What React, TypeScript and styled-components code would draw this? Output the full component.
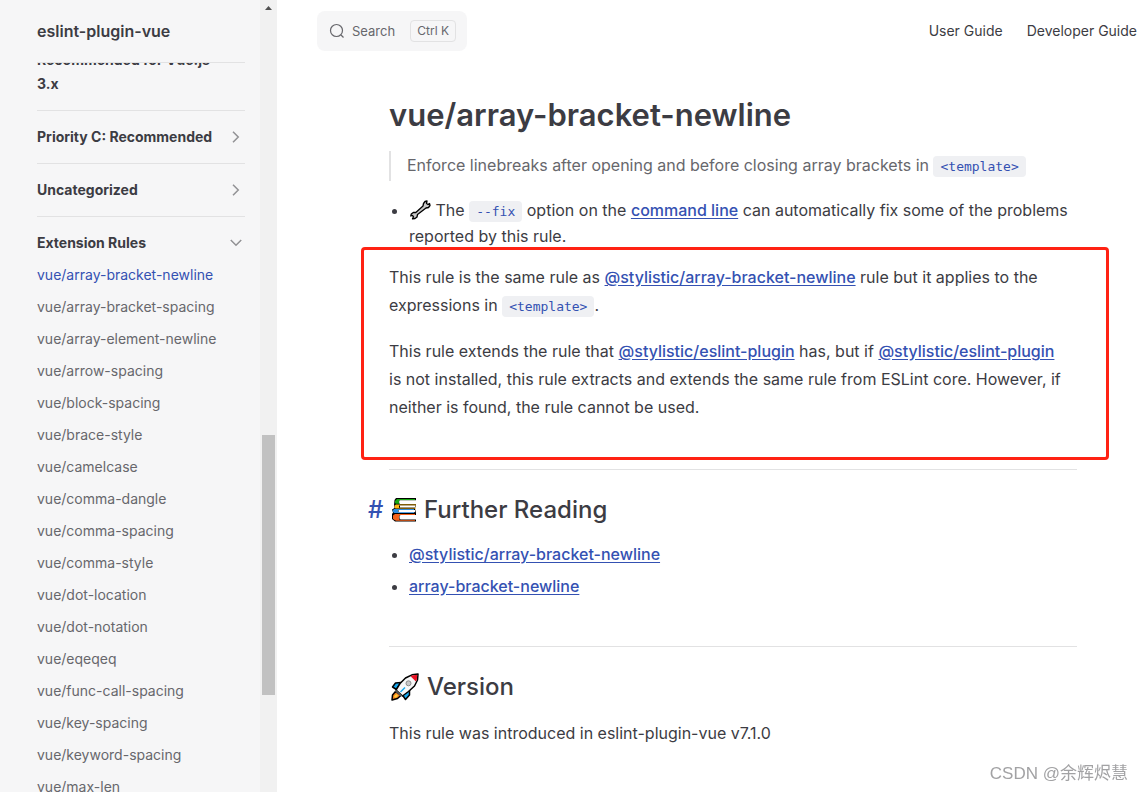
import React from "react";
import styled, { createGlobalStyle, css } from "styled-components";

const Global = createGlobalStyle`
  *, *::before, *::after { box-sizing: border-box; }
  body {
    margin: 0;
    background: #fff;
    color: #3c3c43;
    font: 400 16px/28px Inter, "Noto Sans CJK SC", sans-serif;
  }
  h1, h2, h3, p, ul, blockquote { margin: 0; padding: 0; }
  a { color: inherit; text-decoration: none; }
  button { font: inherit; color: inherit; cursor: pointer; }
`;

const Shell = styled.div`
  display: flex;
  min-height: 100vh;
`;

const Sidebar = styled.aside`
  position: sticky;
  top: 0;
  flex: none;
  display: flex;
  width: 277px;
  height: 100vh;
  overflow: hidden;
  background: #f6f6f7;
`;

const SidebarBody = styled.div`
  flex: 1;
  display: flex;
  flex-direction: column;
  min-width: 0;
  padding: 0 15px 0 37px;
`;

const Brand = styled.a`
  position: relative;
  z-index: 1;
  flex: none;
  height: 63px;
  border-bottom: 1px solid #e2e2e3;
  background: #f6f6f7;
  font-weight: 600;
  line-height: 62px;
`;

const Groups = styled.nav`
  margin-top: -25px;
`;

const Group = styled.section`
  padding: 10px 0;
  & + & { border-top: 1px solid #e2e2e3; }
  &:first-child { padding-top: 6px; }
`;

const GroupToggle = styled.button`
  display: flex;
  align-items: center;
  justify-content: space-between;
  width: 100%;
  padding: 4px 0;
  border: 0;
  background: none;
  text-align: left;
  font-size: 14px;
  line-height: 24px;
  font-weight: 700;
`;

const GroupName = styled.span`
  max-width: 176px;
`;

const Chevron = styled.svg<{ $open?: boolean }>`
  flex: none;
  width: 18px;
  height: 18px;
  fill: none;
  stroke: #929295;
  stroke-width: 2;
  ${(p) => p.$open && css`transform: rotate(90deg);`}
`;

const RuleList = styled.ul`
  list-style: none;
`;

const RuleLink = styled.a<{ $active?: boolean }>`
  display: block;
  padding: 4px 0;
  font-size: 14px;
  line-height: 24px;
  color: ${(p) => (p.$active ? "#3451b2" : "#67676c")};
`;

const Scrollbar = styled.div`
  flex: none;
  display: flex;
  flex-direction: column;
  align-items: center;
  width: 17px;
  background: #f1f1f1;
`;

const ScrollArrow = styled.svg`
  flex: none;
  width: 17px;
  height: 17px;
  fill: #505050;
`;

const ScrollGap = styled.div<{ $grow: number }>`
  flex: ${(p) => p.$grow} 1 0;
`;

const ScrollThumb = styled.div`
  flex: 260 1 0;
  width: 13px;
  background: #c1c1c1;
`;

const Page = styled.div`
  flex: 1;
  min-width: 0;
`;

const TopBar = styled.header`
  display: flex;
  align-items: center;
  justify-content: space-between;
  height: 62px;
  padding: 0 6px 0 40px;
`;

const SearchButton = styled.button`
  display: flex;
  align-items: center;
  width: 150px;
  height: 40px;
  padding: 0 11px 0 12px;
  border: 0;
  border-radius: 8px;
  background: #f6f6f7;
  color: #67676c;
  font-size: 13px;
  line-height: 20px;
`;

const SearchIcon = styled.svg`
  width: 16px;
  height: 16px;
  margin-right: 7px;
  fill: none;
  stroke: #67676c;
  stroke-width: 1.2;
`;

const Shortcut = styled.kbd`
  margin-left: auto;
  padding: 0 6px;
  border: 1px solid #e2e2e3;
  border-radius: 4px;
  font: 400 12px/20px Inter, sans-serif;
`;

const TopLinks = styled.nav`
  display: flex;
  gap: 24px;
  font-size: 14px;
  line-height: 24px;
`;

const Article = styled.main`
  max-width: 866px;
  padding: 33px 66px 45px 112px;
`;

const Title = styled.h1`
  font-size: 31px;
  line-height: 40px;
  font-weight: 600;
`;

const Summary = styled.blockquote`
  margin-top: 16px;
  padding: 0 0 2px 16px;
  border-left: 2px solid #e2e2e3;
  color: #67676c;
`;

const Code = styled.code`
  padding: 3px 7px;
  border-radius: 4px;
  background: #eff0f3;
  color: #3451b2;
  font: 400 13px/20px "DejaVu Sans Mono", monospace;
`;

const TextLink = styled.a`
  color: #3451b2;
  font-weight: 500;
  text-decoration: underline;
  text-underline-offset: 2px;
`;

const Bullets = styled.ul<{ $tight?: boolean }>`
  margin-top: 16px;
  padding-left: 20px;
  line-height: ${(p) => (p.$tight ? "26px" : "24px")};
  li + li { margin-top: 8px; }
`;

const Highlight = styled.section`
  position: relative;
  padding-top: 14px;
  p + p { margin-top: 18px; }
  &::after {
    content: "";
    position: absolute;
    inset: -2px -32px -39px -28px;
    border: 3px solid #ff2213;
    border-radius: 4px;
    pointer-events: none;
  }
`;

const Heading = styled.h2`
  position: relative;
  display: flex;
  align-items: center;
  gap: 8px;
  margin-top: 48px;
  padding-top: 24px;
  border-top: 1px solid #e2e2e3;
  font-size: 24px;
  line-height: 32px;
  font-weight: 500;
`;

const Anchor = styled.a`
  position: absolute;
  left: -21px;
  color: #3451b2;
`;

const Paragraph = styled.p`
  margin-top: 16px;
`;

const Emoji = styled.svg<{ $w: number; $h: number }>`
  flex: none;
  width: ${(p) => p.$w}px;
  height: ${(p) => p.$h}px;
  vertical-align: -4px;
`;

const Watermark = styled.div`
  position: fixed;
  right: 15px;
  bottom: 6px;
  color: #a2a2a4;
  font: 400 17px/24px "Liberation Sans", "Noto Sans CJK SC", sans-serif;
`;

const Wrench = () => (
  <Emoji $w={22} $h={20} viewBox="0 0 22 20" aria-hidden="true">
    <path
      d="M14.500 3.500L16 1.500l2-.5-.5 2.500 1.500 1 1.500-1 .5 2-1.500 2-2.500.5L8.500 14.500l-.5 2.500-2 1.500-2.500.3 1-2-1-1.300-1.700.5.5-2 2-1.500h2.500L14 6z"
      fill="#c9c9c9" stroke="#000" strokeWidth="1.300" strokeLinejoin="round"
    />
  </Emoji>
);

const Books = () => (
  <Emoji $w={27} $h={24} viewBox="0 0 27 24" aria-hidden="true">
    <path d="M7 0h20v6.500l-1 4 1 4.500v8.500H6L3 21v-5l1-1.500-1-3L5.500 10 5 7l.5-5z" fill="#000" />
    <path d="M8 1h18v1.300H11L10 3v2l1 .8H7L6 5V3z" fill="#16a80f" />
    <path d="M11 2.300h16V6H11l-.8-1V3z" fill="#fff" />
    <path d="M7 6.500h20v1H10v2.300h17v.7H6.500L5.500 9.500v-2z" fill="#fdb813" />
    <path d="M11 7.500h15v2H11z" fill="#fff" />
    <path d="M5 11h20v1H9v2h16v1H5l-1.300-1.500v-1z" fill="#2b8ce0" />
    <path d="M9.500 12H26v2.200H9.500z" fill="#fff" />
    <path d="M6 16h20v1H11l-1 1.500V21l1 1h15v.7H7L4 21v-3.500z" fill="#f4611a" />
    <path d="M11.500 17H27v4.500H11.500l-1-1V18z" fill="#fff" />
  </Emoji>
);

const Rocket = () => (
  <Emoji $w={30} $h={28} viewBox="0 0 30 28" aria-hidden="true">
    <g strokeLinejoin="round">
      <path d="M12 9.500L6.500 10 3.500 14l4 2.500zM13.500 22l3 4.500 4-4.500V16.500z" fill="#17a9f0" stroke="#000" strokeWidth="1.500" />
      <path d="M6.500 18.500L3.500 22 3 27l5.500-1.500L12.500 22z" fill="#f5811f" stroke="#000" strokeWidth="1.500" />
      <path d="M29 1l-6 .8L16.500 5 11 10.500 7 17l6.500 6 6-4.500L25.500 13 28.500 7z" fill="#f7f7f7" stroke="#000" strokeWidth="1.500" />
    </g>
    <path d="M28.300 1.700l-5.500.8-1 1 5 5 1-1.800z" fill="#e81123" />
    <path d="M7.500 17l6 5.500-1.800 1L6 18.500z" fill="#555" />
    <path d="M5 23l2.500-2 1.500 2-3 2z" fill="#ffcf3a" />
    <path d="M16 14.500L11.500 19" stroke="#17a9f0" strokeWidth="1.500" />
    <circle cx="19.500" cy="10.300" r="2.500" fill="#c8c8c8" stroke="#8c8c8c" />
  </Emoji>
);

const rules = [
  "array-bracket-newline", "array-bracket-spacing", "array-element-newline", "arrow-spacing",
  "block-spacing", "brace-style", "camelcase", "comma-dangle", "comma-spacing", "comma-style",
  "dot-location", "dot-notation", "eqeqeq", "func-call-spacing", "key-spacing",
  "keyword-spacing", "max-len",
];

const SidebarGroup = ({ name, open, plain, children }: {
  name: string; open?: boolean; plain?: boolean; children?: React.ReactNode;
}) => (
  <Group>
    <GroupToggle type="button" aria-expanded={!!open}>
      <GroupName>{name}</GroupName>
      {!plain && (
        <Chevron $open={open} viewBox="0 0 24 24" aria-hidden="true">
          <path d="M8 5l7 7-7 7" />
        </Chevron>
      )}
    </GroupToggle>
    {children}
  </Group>
);

export default function App() {
  return (
    <>
      <Global />
      <Shell>
        <Sidebar>
          <SidebarBody>
            <Brand href="#">eslint-plugin-vue</Brand>
            <Groups aria-label="Rules">
              <SidebarGroup name="Recommended for Vue.js 3.x" plain />
              <SidebarGroup name="Priority C: Recommended" />
              <SidebarGroup name="Uncategorized" />
              <SidebarGroup name="Extension Rules" open>
                <RuleList>
                  {rules.map((r, i) => (
                    <li key={r}><RuleLink href={`#${r}`} $active={i === 0}>vue/{r}</RuleLink></li>
                  ))}
                </RuleList>
              </SidebarGroup>
            </Groups>
          </SidebarBody>
          <Scrollbar aria-hidden="true">
            <ScrollArrow viewBox="0 0 17 17"><path d="M5 10h7L8.500 6z" /></ScrollArrow>
            <ScrollGap $grow={418} />
            <ScrollThumb />
            <ScrollGap $grow={97} />
          </Scrollbar>
        </Sidebar>
        <Page>
          <TopBar>
            <SearchButton type="button">
              <SearchIcon viewBox="0 0 16 16" aria-hidden="true">
                <circle cx="7.500" cy="7.500" r="6" /><path d="M12 12l2.500 2.500" />
              </SearchIcon>
              Search
              <Shortcut>Ctrl K</Shortcut>
            </SearchButton>
            <TopLinks aria-label="Main">
              <a href="#user-guide">User Guide</a>
              <a href="#developer-guide">Developer Guide</a>
            </TopLinks>
          </TopBar>
          <Article>
            <Title>vue/array-bracket-newline</Title>
            <Summary>
              Enforce linebreaks after opening and before closing array brackets in <Code>{"<template>"}</Code>
            </Summary>
            <Bullets $tight>
              <li>
                <Wrench /> The <Code>--fix</Code> option on the <TextLink href="#cli">command line</TextLink> can
                automatically fix some of the problems reported by this rule.
              </li>
            </Bullets>
            <Highlight>
              <p>
                This rule is the same rule as <TextLink href="#abn">@stylistic/array-bracket-newline</TextLink> rule
                but it applies to the expressions in <Code>{"<template>"}</Code>.
              </p>
              <p>
                This rule extends the rule that <TextLink href="#sp">@stylistic/eslint-plugin</TextLink> has, but
                if <TextLink href="#sp">@stylistic/eslint-plugin</TextLink><br />
                is not installed, this rule extracts and extends the same rule from ESLint core. However, if
                neither is found, the rule cannot be used.
              </p>
            </Highlight>
            <Heading id="further-reading">
              <Anchor href="#further-reading">#</Anchor><Books />Further Reading
            </Heading>
            <Bullets>
              <li><TextLink href="#abn">@stylistic/array-bracket-newline</TextLink></li>
              <li><TextLink href="#core">array-bracket-newline</TextLink></li>
            </Bullets>
            <Heading><Rocket />Version</Heading>
            <Paragraph>This rule was introduced in eslint-plugin-vue v7.1.0</Paragraph>
          </Article>
        </Page>
      </Shell>
      <Watermark>CSDN @余辉烬慧</Watermark>
    </>
  );
}
